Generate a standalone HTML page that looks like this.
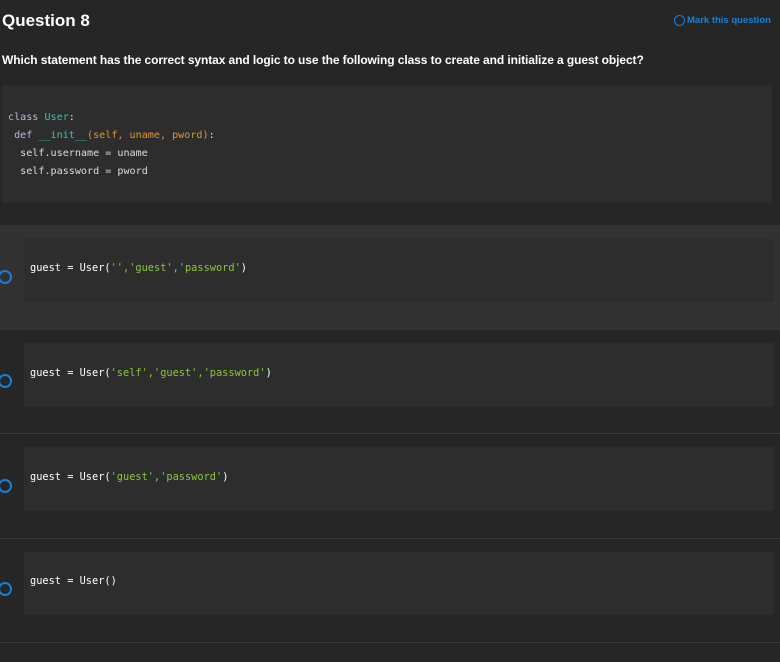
<!DOCTYPE html>
<html><head><style>
body{margin:0;background:#262626;width:780px;height:662px;overflow:hidden;font-family:"Liberation Sans",sans-serif;color:#fff;position:relative}
.abs{position:absolute}
.mono{font-family:"DejaVu Sans Mono","Liberation Mono",monospace;font-size:10.3px;white-space:pre}
.box{background:#2d2d2d}
.radio{position:absolute;left:-2px;width:10px;height:10px;border:2px solid #1a7fd4;border-radius:50%}
.sep{position:absolute;left:0;width:780px;height:1px;background:#383838}
.g{color:#8cc63f}
</style></head><body>
<div class="abs" style="left:2px;top:11px;font-size:17px;font-weight:bold">Question 8</div>
<div class="abs" style="left:674px;top:15px;font-size:9.5px;color:#1a7fd4;font-weight:bold;display:flex;align-items:center"><span style="width:9px;height:9px;border:1.5px solid #1a7fd4;border-radius:50%;display:inline-block;margin-right:2px"></span>Mark this question</div>
<div class="abs" style="left:2px;top:53px;font-size:12px;font-weight:bold;letter-spacing:-0.09px">Which statement has the correct syntax and logic to use the following class to create and initialize a guest object?</div>
<div class="abs box" style="left:2px;top:85px;width:770px;height:118px"></div>
<div class="abs mono" style="left:8px;top:109px;line-height:18px;color:#ddd;font-size:10.1px"><span style="color:#b8b8e0">class</span> <span style="color:#2ec4b6">User</span>:
 <span style="color:#b8b8e0">def</span> <span style="color:#2ec4b6">__init__</span><span style="color:#e0952e">(self, uname, pword)</span>:
  self.username = uname
  self.password = pword</div>
<div class="abs" style="left:0;top:225px;width:780px;height:105px;background:#323232"></div>
<div class="abs box" style="left:24px;top:239px;width:750px;height:63px"></div>
<div class="radio" style="top:270px"></div>
<div class="abs mono" style="left:30px;top:262px">guest = User(<span class="g">'','guest','password'</span>)</div>
<div class="abs box" style="left:24px;top:343px;width:750px;height:64px"></div>
<div class="radio" style="top:374px"></div>
<div class="abs mono" style="left:30px;top:367px">guest = User(<span class="g">'self','guest','password'</span>)</div>
<div class="sep" style="top:433px"></div>
<div class="abs box" style="left:24px;top:447px;width:750px;height:64px"></div>
<div class="radio" style="top:479px"></div>
<div class="abs mono" style="left:30px;top:471px">guest = User(<span class="g">'guest','password'</span>)</div>
<div class="sep" style="top:538px"></div>
<div class="abs box" style="left:24px;top:552px;width:750px;height:63px"></div>
<div class="radio" style="top:582px"></div>
<div class="abs mono" style="left:30px;top:575px">guest = User()</div>
<div class="sep" style="top:642px"></div>
</body></html>
